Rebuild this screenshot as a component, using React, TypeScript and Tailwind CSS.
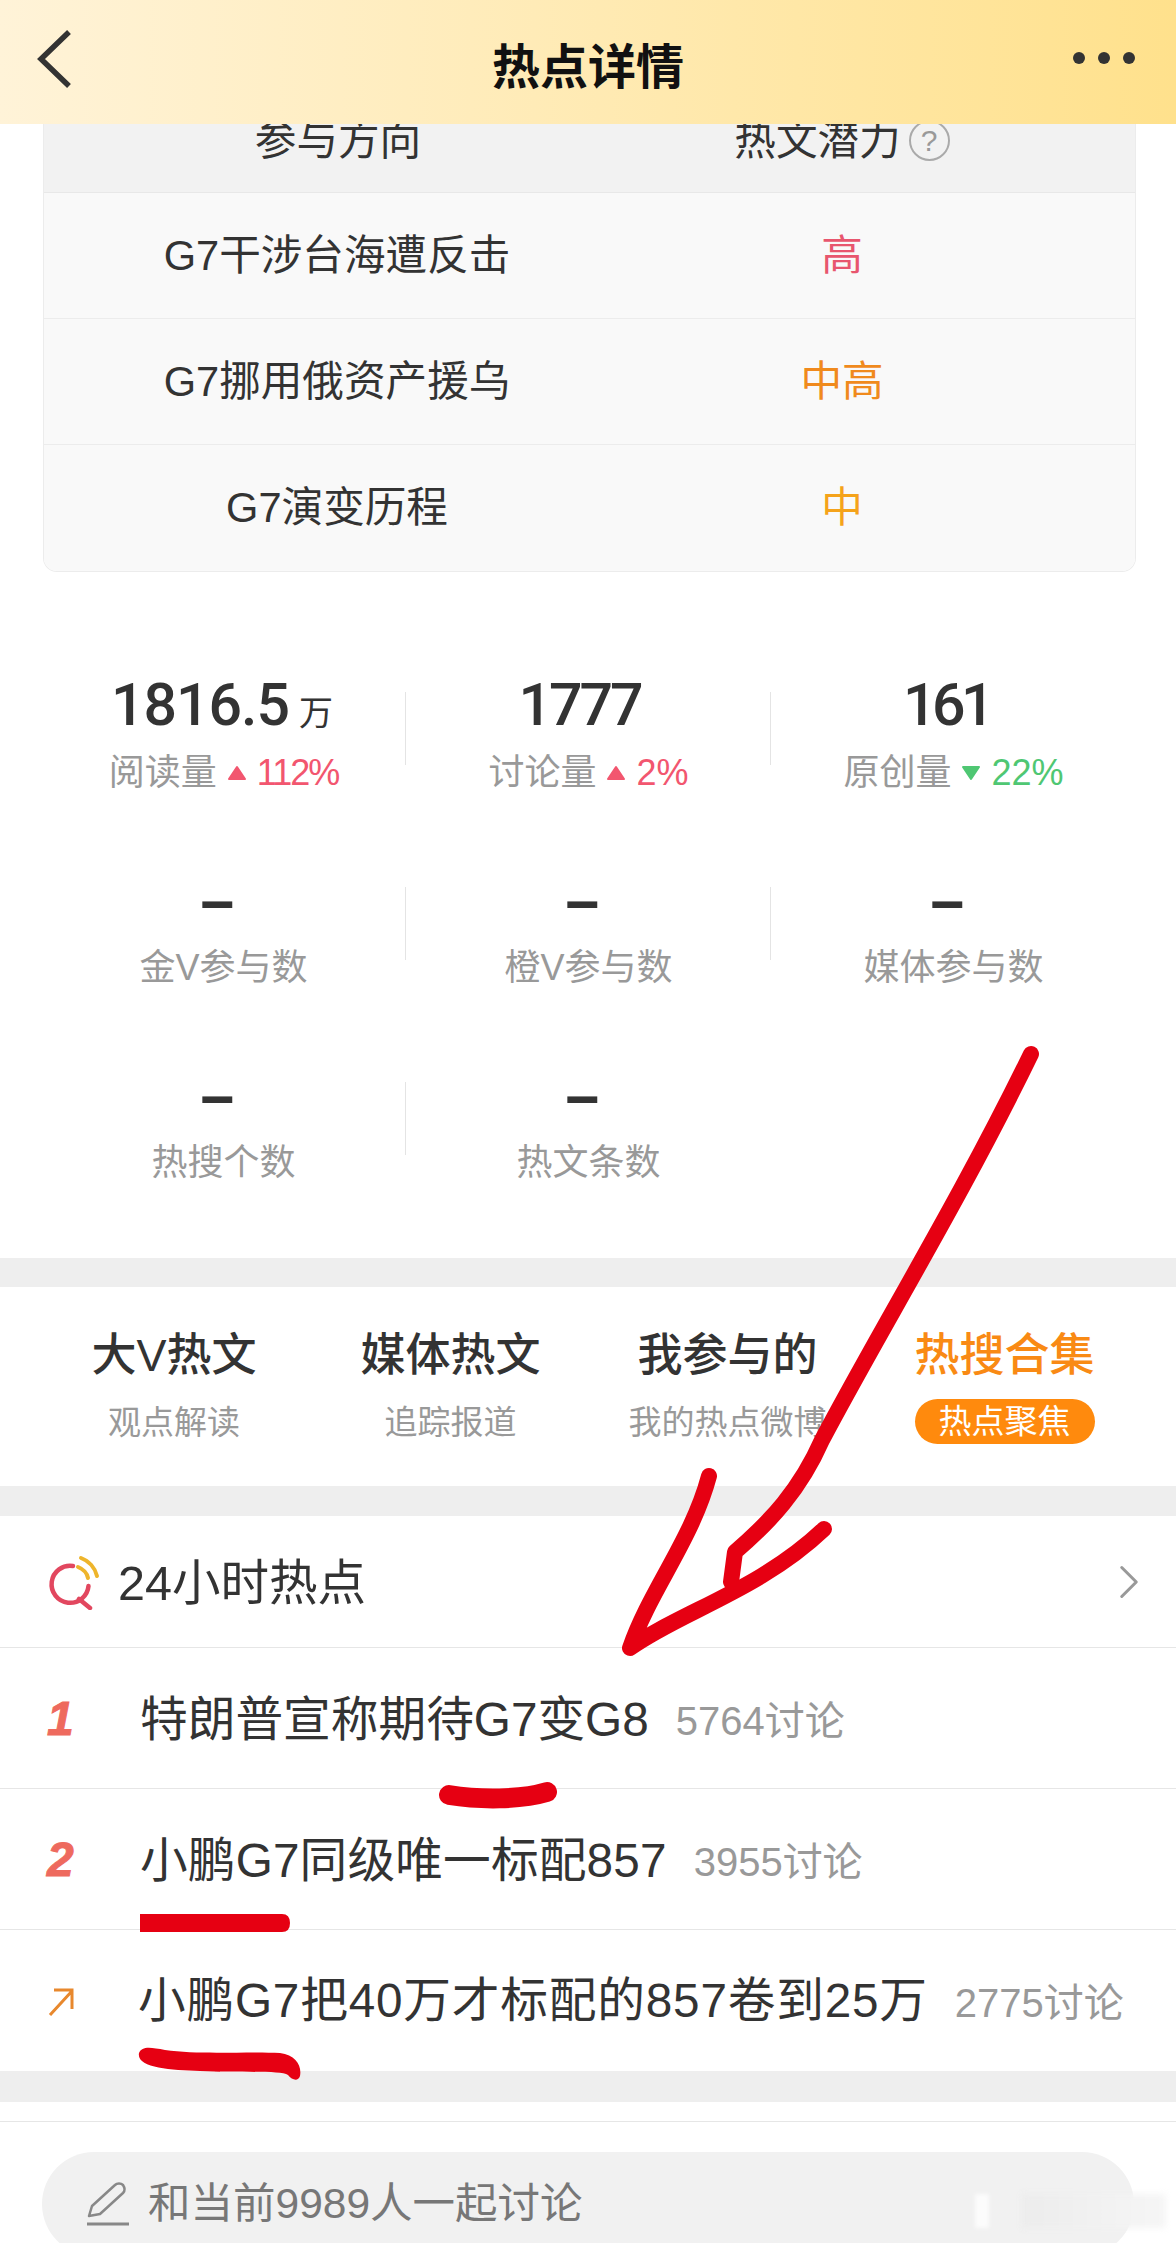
import React from 'react';
import { ChevronRight } from 'lucide-react';

const directions = [
  { name: 'G7干涉台海遭反击', level: '高', color: 'text-[#e8566e]' },
  { name: 'G7挪用俄资产援乌', level: '中高', color: 'text-[#f08a1d]' },
  { name: 'G7演变历程', level: '中', color: 'text-[#f5a31a]' },
];

const stats = [
  { value: '1816.5', numClass: 'pr-[4px] font-medium tracking-[-1px]', unit: '万', label: '阅读量', trend: 'up', pct: '112%', pctClass: 'tracking-[-2px]' },
  { value: '1777', numClass: 'pr-[18px] font-medium tracking-[-3px]', label: '讨论量', trend: 'up', pct: '2%' },
  { value: '161', numClass: 'pr-[14px] font-medium tracking-[-4.5px]', label: '原创量', trend: 'down', pct: '22%' },
  { value: '–', numClass: 'pr-[14px] font-bold pt-[5px]', label: '金V参与数' },
  { value: '–', numClass: 'pr-[14px] font-bold pt-[5px]', label: '橙V参与数' },
  { value: '–', numClass: 'pr-[14px] font-bold pt-[5px]', label: '媒体参与数' },
  { value: '–', numClass: 'pr-[14px] font-bold pt-[5px]', label: '热搜个数' },
  { value: '–', numClass: 'pr-[14px] font-bold pt-[5px]', label: '热文条数' },
];

const tabs = [
  { title: '大V热文', sub: '观点解读' },
  { title: '媒体热文', sub: '追踪报道' },
  { title: '我参与的', sub: '我的热点微博' },
  { title: '热搜合集', sub: '热点聚焦', active: true },
];

const hotList = [
  { rank: '1', title: '特朗普宣称期待G7变G8', count: '5764讨论', titleClass: 'pt-[4px]' },
  { rank: '2', title: '小鹏G7同级唯一标配857', count: '3955讨论', titleClass: 'pt-[3px] tracking-[0.15px]' },
  { rank: '', title: '小鹏G7把40万才标配的857卷到25万', count: '2775讨论', titleClass: '-ml-[2px] tracking-[0.8px]' },
];

function Triangle({ down }: { down?: boolean }) {
  return (
    <svg width="20" height="16" viewBox="0 0 20 16" className="mx-[10px] shrink-0">
      {down ? (
        <path d="M2 2 H18 L10 14 Z" fill="#4fc773" stroke="#4fc773" strokeWidth="2" strokeLinejoin="round" />
      ) : (
        <path d="M10 2 L18 14 H2 Z" fill="#f2566f" stroke="#f2566f" strokeWidth="2" strokeLinejoin="round" />
      )}
    </svg>
  );
}

function SearchHotIcon() {
  return (
    <svg width="52" height="56" viewBox="0 0 52 56" fill="none" className="shrink-0">
      <path d="M25 12 A18.5 18.5 0 1 0 40.5 32" stroke="#e2475f" strokeWidth="4.5" strokeLinecap="round" />
      <path d="M31 45 L42 54" stroke="#e2475f" strokeWidth="4.5" strokeLinecap="round" />
      <path d="M30 13 C35 15 39 19 40 24" stroke="#eeb52c" strokeWidth="4" strokeLinecap="round" />
      <path d="M33 4 C41 7 47 14 49 22" stroke="#eeb52c" strokeWidth="4" strokeLinecap="round" />
    </svg>
  );
}

function RedMarks() {
  return (
    <svg width="1176" height="2243" viewBox="0 0 1176 2243" fill="none" className="absolute left-0 top-0 z-20 pointer-events-none">
      <g stroke="#e60012" strokeLinecap="round" strokeLinejoin="round">
        <path d="M1031 1054 C960 1200 880 1330 822 1440 C800 1490 770 1522 735 1552 L731 1582" strokeWidth="16" />
        <path d="M709 1476 C692 1540 650 1590 630 1648 C680 1612 760 1590 824 1529" strokeWidth="16" />
        <path d="M449 1795 C480 1800 520 1800 547 1792" strokeWidth="20" />
      </g>
      <path d="M140 1914 H282 Q290 1914 290 1923 Q290 1932 282 1932 H140 Z" fill="#e60012" />
      <path d="M139 2053 C142 2046 150 2047 165 2050 C200 2055 250 2051 280 2053 C296 2055 302 2066 300 2076 C298 2082 292 2080 288 2075 C280 2070 240 2073 200 2071 C170 2070 136 2068 139 2053 Z" fill="#e60012" />
    </svg>
  );
}

export default function App() {
  return (
    <div className="relative w-[1176px] h-[2243px] overflow-hidden bg-white text-[#333] [font-family:'Liberation_Sans','Noto_Sans_CJK_SC',sans-serif]">
      <header className="relative z-10 h-[124px] bg-gradient-to-r from-[#fff3d8] to-[#ffe18c]">
        <div className="grid h-full grid-cols-[1fr_auto_1fr] items-start pl-[36px] pr-[41px]">
          <svg width="36" height="60" viewBox="0 0 36 60" fill="none" className="mt-[29px]">
            <path d="M33 3 L5 30 L33 57" stroke="#333" strokeWidth="5.5" />
          </svg>
          <h1 className="ml-[5px] mt-[40px] text-[48px] leading-[56px] font-bold text-[#111]">热点详情</h1>
          <div className="mt-[52px] flex justify-end gap-[13px]">
            <span className="size-[12px] rounded-full bg-[#333]" />
            <span className="size-[12px] rounded-full bg-[#333]" />
            <span className="size-[12px] rounded-full bg-[#333]" />
          </div>
        </div>
      </header>

      <section className="-mt-[20px] px-[43px] pr-[40px]">
        <div className="overflow-hidden rounded-b-[14px] border-x border-b border-[#ececec] text-[41.6px] leading-[50px]">
          <div className="grid h-[89px] grid-cols-[588px_420px] border-b border-[#e8e8e8] bg-[#f2f2f2] pb-[15px]">
            <div className="flex items-center justify-center">参与方向</div>
            <div className="flex items-center justify-center">
              热文潜力
              <span className="ml-[8px] flex size-[41px] items-center justify-center rounded-full border-2 border-[#aaa] text-[30px] leading-none text-[#999]">?</span>
            </div>
          </div>
          {directions.map((row, i) => (
            <div
              key={row.name}
              className={`grid h-[126px] grid-cols-[586px_424px] items-center bg-[#f9f9f9] ${i < 2 ? 'border-b border-[#ececec]' : ''}`}
            >
              <div className="text-center">{row.name}</div>
              <div className={`text-center ${row.color}`}>{row.level}</div>
            </div>
          ))}
        </div>
      </section>

      <section className="mt-[98px] mb-[3px] grid grid-cols-[365px_365px_365px] pl-[41px]">
        {stats.map((s, i) => (
          <div key={s.label} className="relative h-[195px] text-center">
            {i % 3 !== 2 && i !== 7 && (
              <span className="absolute right-0 top-[22px] h-[73px] w-px bg-[#e4e4e4]" />
            )}
            <div className={`h-[70px] text-[59px] leading-[70px] [font-family:Roboto,'Noto_Sans_CJK_SC',sans-serif] ${s.numClass}`}>
              {s.value}
              {s.unit && <span className="ml-[10px] text-[34px] font-normal">{s.unit}</span>}
            </div>
            <div className="mt-[8px] flex h-[50px] items-center justify-center text-[36px] leading-[50px] text-[#999]">
              {s.label}
              {s.pct && <Triangle down={s.trend === 'down'} />}
              {s.pct && (
                <span className={`${s.pctClass ?? ''} ${s.trend === 'down' ? 'text-[#4fc773]' : 'text-[#f2566f]'}`}>{s.pct}</span>
              )}
            </div>
          </div>
        ))}
      </section>

      <div className="h-[29px] bg-[#eeeeee]" />

      <nav className="grid h-[199px] grid-cols-[276px_277px_277px_277px] pl-[36px] pt-[39px]">
        {tabs.map((t) => (
          <div key={t.title} className="flex flex-col items-center">
            <div className={`text-[45px] leading-[60px] font-medium ${t.active ? 'text-[#f98a14]' : 'text-[#333]'}`}>{t.title}</div>
            {t.active ? (
              <div className="mt-[13px] flex h-[45px] w-[180px] items-center justify-center rounded-full bg-[#ff8a0d] text-[33px] leading-none text-white">
                {t.sub}
              </div>
            ) : (
              <div className="mt-[14px] flex h-[45px] items-center text-[33px] leading-none text-[#999]">{t.sub}</div>
            )}
          </div>
        ))}
      </nav>

      <div className="h-[30px] bg-[#eeeeee]" />

      <div className="flex h-[132px] items-center border-b border-[#e6e6e6] pl-[48px] pr-[38px]">
        <SearchHotIcon />
        <span className="ml-[18px] flex-1 pt-[2px] text-[48.5px] leading-[56px]">24小时热点</span>
        <ChevronRight size={58} strokeWidth={1.25} className="-mr-[20px] text-[#999]" />
      </div>

      {hotList.map((item, i) => (
        <div key={item.title} className={`flex h-[141px] items-center ${i < 2 ? 'border-b border-[#e6e6e6]' : ''}`}>
          <div className="w-[140px] shrink-0 pl-[47px] pt-[2px]">
            {item.rank ? (
              <span className="text-[48px] leading-none font-black italic text-[#ee6a5e] [-webkit-text-stroke:1px_#ee6a5e]">{item.rank}</span>
            ) : (
              <svg width="28" height="30" viewBox="0 0 28 30" fill="none">
                <path d="M3 28 L25 4 M7 3 H25 V22" stroke="#e8882d" strokeWidth="3" />
              </svg>
            )}
          </div>
          <span className={`text-[47.7px] leading-[56px] whitespace-nowrap ${item.titleClass}`}>{item.title}</span>
          <span className="ml-[27px] pt-[5px] text-[40px] leading-[50px] whitespace-nowrap text-[#999]">{item.count}</span>
        </div>
      ))}

      <div className="h-[31px] bg-[#eeeeee]" />
      <div className="h-[20px] border-b border-[#e6e6e6]" />

      <div className="relative mx-[42px] mt-[30px] flex h-[104px] items-center rounded-[52px] bg-[#f1f1f1] pl-[44px]">
        <svg width="44" height="44" viewBox="0 0 44 44" fill="none" className="shrink-0">
          <path d="M3 34 L6 24 L29 3 C31 1 35 1 37 3 C39 6 39 9 37 11 L14 32 Z" stroke="#888" strokeWidth="2.5" strokeLinejoin="round" />
          <path d="M1 42 H43" stroke="#888" strokeWidth="3" />
        </svg>
        <span className="ml-[18px] text-[42.5px] leading-[52px] text-[#777]">和当前9989人一起讨论</span>
        <span className="absolute left-[933px] top-[42px] h-[34px] w-[14px] bg-white/80 blur-[2px]" />
        <span className="absolute left-[980px] top-[42px] h-[34px] w-[144px] bg-gradient-to-r from-[#ececec] to-[#f6f6f6] blur-[3px]" />
      </div>

      <RedMarks />
    </div>
  );
}
